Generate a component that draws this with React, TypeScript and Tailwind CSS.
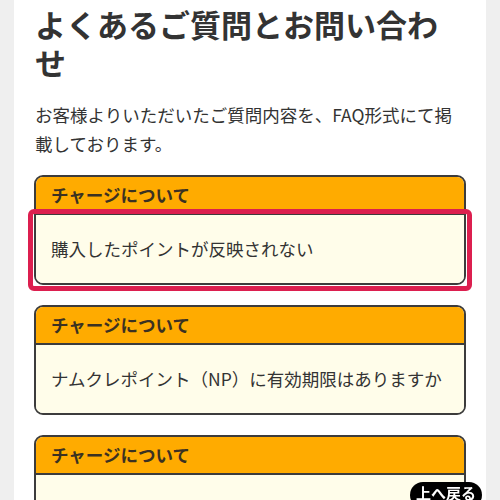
import React from "react";

const items = [
  { cat: "チャージについて", q: "購入したポイントが反映されない", hl: true },
  { cat: "チャージについて", q: "ナムクレポイント（NP）に有効期限はありますか", hl: false },
  { cat: "チャージについて", q: "ポイントの購入方法を知りたい", hl: false },
];

export default function App() {
  return (
    <div
      className="min-h-[700px] bg-[#efefef] px-[14px]"
      style={{ fontFamily: '"Noto Sans CJK JP", "Noto Sans", sans-serif' }}
    >
      <div className="min-h-[700px] bg-white px-[20px] pt-[5px] pb-[40px] text-[#333]">
        <h1 className="text-[31px] font-bold leading-[38px] pl-[1px]">
          よくあるご質問とお問い合わせ
        </h1>
        <p className="mt-[19px] text-[17.5px] leading-[29px] pl-[1px]">
          お客様よりいただいたご質問内容を、FAQ形式にて掲載しております。
        </p>
        <div className="mt-[17px] flex flex-col gap-[20px]">
          {items.map((it, i) => (
            <div key={i} className="flex flex-col rounded-[9px] border-2 border-[#3c3c3c]">
              <div className="flex h-[36px] items-center rounded-t-[7px] bg-[#ffab00] px-[15px] text-[17.5px] font-bold text-[#3b3122]">
                {it.cat}
              </div>
              <div className="relative flex h-[70px] items-center rounded-b-[7px] border-t-2 border-[#3c3c3c] bg-[#fffdea] px-[15px] text-[17.5px]">
                {it.q}
                {it.hl && (
                  <div className="pointer-events-none absolute left-[-8px] right-[-8px] top-[-6px] bottom-[-8px] rounded-[6px] border-[5px] border-[#dc1f4f]" />
                )}
              </div>
            </div>
          ))}
        </div>
      </div>
      <div className="fixed right-[18px] top-[482px] flex h-[26px] w-[72px] items-start justify-center rounded-full bg-black pt-[1px] text-[15px] font-bold leading-[20px] text-white">
        上へ戻る
      </div>
    </div>
  );
}
